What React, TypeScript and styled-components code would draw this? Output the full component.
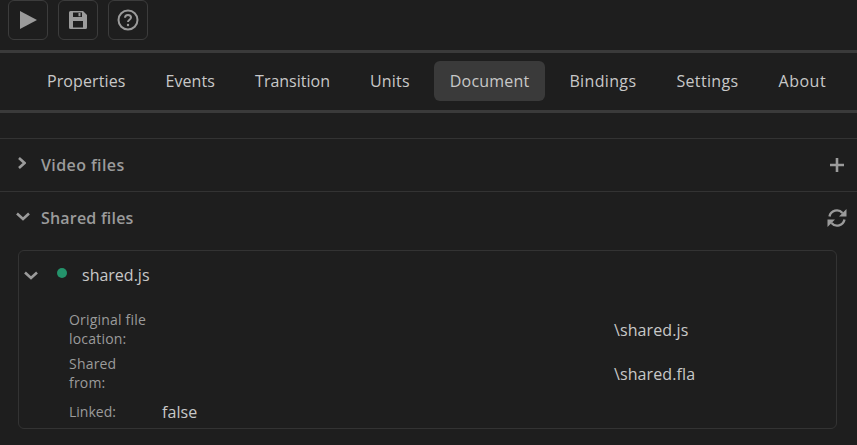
import React from "react";
import styled, { createGlobalStyle } from "styled-components";

const GlobalStyle = createGlobalStyle`
  html, body {
    margin: 0;
    padding: 0;
    background: #1e1e1e;
  }
  body {
    font-family: "Open Sans", "Noto Sans", sans-serif;
    color: #c8c8c8;
    overflow: hidden;
  }
`;

const Page = styled.div`
  width: 857px;
  height: 445px;
  overflow: hidden;
`;

const Toolbar = styled.div`
  display: flex;
  gap: 10px;
  height: 50px;
  padding-left: 8px;
  box-sizing: border-box;
`;

const ToolButton = styled.button`
  width: 40px;
  height: 40px;
  padding: 0;
  display: flex;
  align-items: center;
  justify-content: center;
  background: #1e1e1e;
  border: 1px solid #3c3c3c;
  border-radius: 6px;
  color: #9b9b9b;
`;

const Tabs = styled.nav`
  display: flex;
  gap: 8px;
  height: 63px;
  padding: 8px 0 0 31px;
  border-top: 3px solid #3a3a3a;
  border-bottom: 3px solid #3a3a3a;
  box-sizing: border-box;
`;

const Tab = styled.div<{ $active?: boolean; $spacing: number }>`
  height: 40px;
  padding: 0 16px;
  display: flex;
  align-items: center;
  border-radius: 6px;
  font-size: 16px;
  letter-spacing: ${(p) => p.$spacing}px;
  color: #c8c8c8;
  background: ${(p) => (p.$active ? "#3a3a3a" : "transparent")};
`;

const Sections = styled.div`
  margin-top: 25px;
  border-top: 1px solid #333;
`;

const SectionHeader = styled.div<{ $open?: boolean }>`
  display: flex;
  align-items: center;
  height: 52px;
  padding: 0 10px 0 16px;
  border-bottom: ${(p) => (p.$open ? "0" : "1px solid #333")};
  color: #9b9b9b;
`;

const SectionTitle = styled.span<{ $spacing: number }>`
  flex: 1;
  font-size: 16px;
  font-weight: 600;
  letter-spacing: ${(p) => p.$spacing}px;
`;

const ChevronSlot = styled.span`
  width: 25px;
  display: flex;
  margin-top: -4px;
`;

const PlusSlot = styled.span`
  display: flex;
  margin-right: 2px;
`;

const Card = styled.div`
  margin: 6px 20px 0 18px;
  height: 179px;
  box-sizing: border-box;
  border: 1px solid #333;
  border-radius: 6px;
`;

const CardHeader = styled.div`
  display: flex;
  align-items: center;
  height: 48px;
  padding-left: 5px;
  color: #9b9b9b;
`;

const StatusDot = styled.span`
  width: 10px;
  height: 10px;
  margin: -4px 0 0 19px;
  border-radius: 50%;
  background: #24936b;
`;

const FileName = styled.span`
  margin-left: 15px;
  font-size: 16px;
  color: #c8c8c8;
`;

const Details = styled.div`
  display: grid;
  grid-template-columns: 93px 452px 1fr;
  padding: 11px 0 0 50px;
  row-gap: 4px;
  align-items: center;
`;

const Label = styled.div<{ $last?: boolean }>`
  font-size: 14px;
  line-height: 19px;
  margin-bottom: 2px;
  margin-top: ${(p) => (p.$last ? "3px" : "0")};
  color: #9b9b9b;
  letter-spacing: ${(p) => (p.$last ? "0" : "0.2px")};
`;

const Value = styled.div<{ $last?: boolean }>`
  font-size: 16px;
  margin-top: ${(p) => (p.$last ? "3px" : "0")};
  letter-spacing: 0.1px;
  color: #c8c8c8;
`;

const Right = () => (
  <svg width="10" height="12" viewBox="0 0 10 12" fill="none" stroke="currentColor" strokeWidth="2.600">
    <path d="M3 1l5.500 5-5.500 5" />
  </svg>
);

const Down = () => (
  <svg width="14" height="9" viewBox="0 0 14 9" fill="none" stroke="currentColor" strokeWidth="2.600">
    <path d="M1 1.500l6 5.500 6-5.500" />
  </svg>
);

const Plus = () => (
  <svg width="16" height="16" viewBox="0 0 16 16" fill="none" stroke="currentColor" strokeWidth="2.600">
    <path d="M8 1v14M1 8h14" />
  </svg>
);

const Save = () => (
  <svg width="18" height="18" viewBox="0 0 18 18" fill="currentColor">
    <path
      fillRule="evenodd"
      d="M0 1.500A1.500 1.500 0 0 1 1.500 0H14l4 4v12.500a1.500 1.500 0 0 1-1.500 1.500h-15A1.500 1.500 0 0 1 0 16.500zM4 1.500v4.500h9V1.500zM9.500 2h2v3.200h-2zM4 10v6.500h10V10z"
    />
  </svg>
);

const Help = () => (
  <svg width="22" height="22" viewBox="0 0 22 22" fill="none" stroke="currentColor">
    <circle cx="11" cy="11" r="9.500" strokeWidth="2" />
    <path d="M8 8.700c0-1.800 1.300-2.800 3-2.800s3 1 3 2.600c0 2.300-3 2.300-3 4.500" strokeWidth="2" />
    <circle cx="11" cy="16" r="1.200" fill="currentColor" stroke="none" />
  </svg>
);

const Sync = () => (
  <svg width="20" height="20" viewBox="0 0 20 20" fill="none" stroke="currentColor">
    <path d="M2.500 8.500A7.500 7.500 0 0 1 15.500 5" strokeWidth="2.400" />
    <path d="M17.500 11.500A7.500 7.500 0 0 1 4.500 15" strokeWidth="2.400" />
    <path d="M19.500 1v7.500H12z" fill="currentColor" stroke="none" />
    <path d="M.5 19v-7.500H8z" fill="currentColor" stroke="none" />
  </svg>
);

const tabs = [
  { label: "Properties", spacing: 0.1 },
  { label: "Events", spacing: 0.1 },
  { label: "Transition", spacing: 0 },
  { label: "Units", spacing: 0.2 },
  { label: "Document", spacing: 0.2 },
  { label: "Bindings", spacing: 0.35 },
  { label: "Settings", spacing: 0.35 },
  { label: "About", spacing: 0.5 },
];

export default function App() {
  return (
    <Page>
      <GlobalStyle />
      <Toolbar>
        <ToolButton>
          <svg width="20" height="20" viewBox="0 0 20 20" fill="currentColor">
            <path d="M2 1l17 9-17 9z" />
          </svg>
        </ToolButton>
        <ToolButton>
          <Save />
        </ToolButton>
        <ToolButton>
          <Help />
        </ToolButton>
      </Toolbar>
      <Tabs>
        {tabs.map((t) => (
          <Tab key={t.label} $active={t.label === "Document"} $spacing={t.spacing}>
            {t.label}
          </Tab>
        ))}
      </Tabs>
      <Sections>
        <SectionHeader>
          <ChevronSlot>
            <Right />
          </ChevronSlot>
          <SectionTitle $spacing={0.4}>Video files</SectionTitle>
          <PlusSlot>
            <Plus />
          </PlusSlot>
        </SectionHeader>
        <SectionHeader $open>
          <ChevronSlot>
            <Down />
          </ChevronSlot>
          <SectionTitle $spacing={0.2}>Shared files</SectionTitle>
          <Sync />
        </SectionHeader>
        <Card>
          <CardHeader>
            <Down />
            <StatusDot />
            <FileName>shared.js</FileName>
          </CardHeader>
          <Details>
            <Label>
              Original file
              <br />
              location:
            </Label>
            <span />
            <Value>\shared.js</Value>
            <Label>
              Shared
              <br />
              from:
            </Label>
            <span />
            <Value>\shared.fla</Value>
            <Label $last>Linked:</Label>
            <Value $last>false</Value>
          </Details>
        </Card>
      </Sections>
    </Page>
  );
}
